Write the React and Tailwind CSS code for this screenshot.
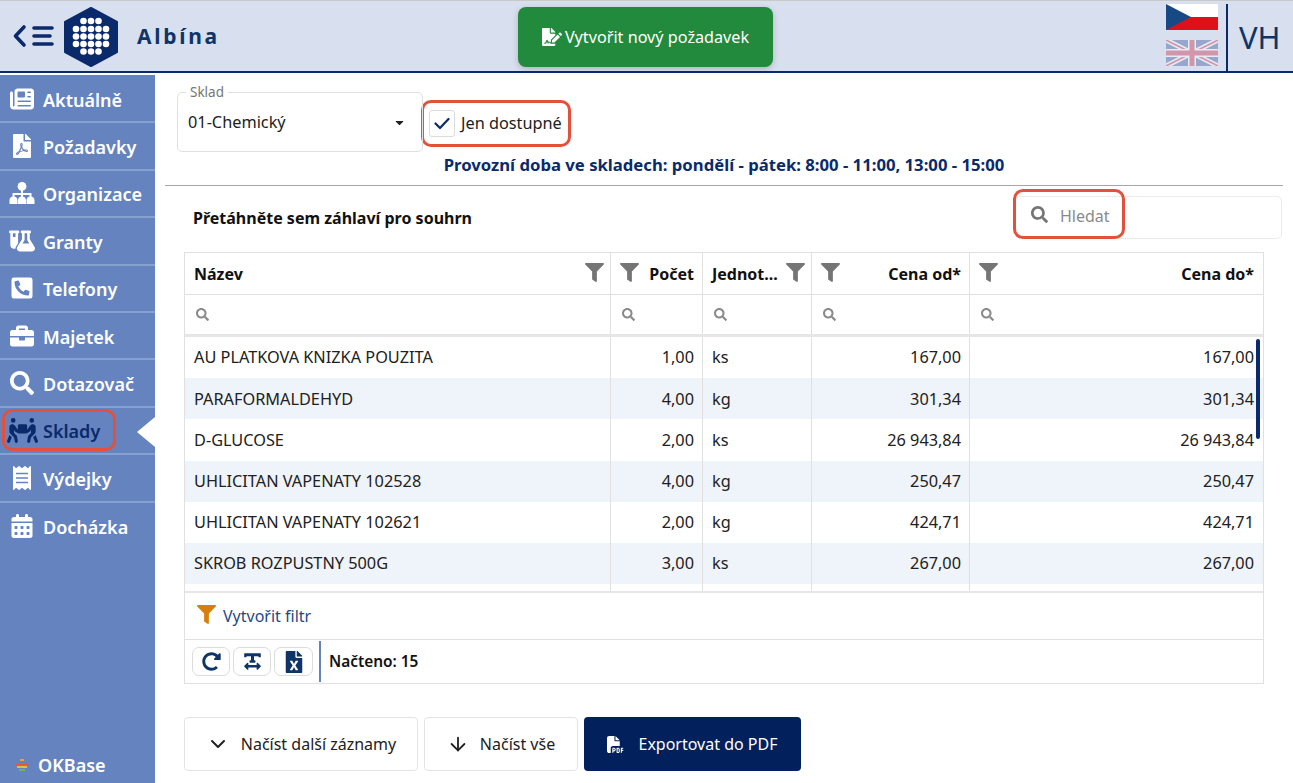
import {
  FaPhoneSquareAlt, FaBriefcase, FaSearch, FaReceipt, FaFilePdf, FaFileSignature, FaFilter,
  FaRedoAlt, FaTextWidth, FaFileExcel, FaCaretDown,
} from "react-icons/fa";
import { FaFlaskVial, FaNewspaper, FaPeopleCarryBox, FaCalendarDays, FaFilePdf as FaFilePdfLabel } from "react-icons/fa6";
import { ChevronDown, ArrowDown } from "lucide-react";

const Organization = ({ className }) => (
  <svg viewBox="0 0 26 22" fill="currentColor" className={className}>
    <circle cx="13" cy="4.4" r="4.4" />
    <path d="M12 8h2v3h8.5v4h-2v-2H14v2h-2v-2H5.500v2h-2v-4H12z" />
    <path d="M4.500 14.500c2.500 0 4 1.500 4 3.700V22H.5v-3.800c0-2.200 1.500-3.700 4-3.700z" />
    <path d="M13 14.500c2.500 0 4 1.500 4 3.700V22H9v-3.800c0-2.200 1.500-3.700 4-3.700z" />
    <path d="M21.500 14.500c2.500 0 4 1.500 4 3.700V22h-8v-3.800c0-2.200 1.500-3.700 4-3.700z" />
  </svg>
);

const menu = [
  { label: "Aktuálně", icon: FaNewspaper },
  { label: "Požadavky", icon: FaFilePdf },
  { label: "Organizace", icon: Organization },
  { label: "Granty", icon: FaFlaskVial },
  { label: "Telefony", icon: FaPhoneSquareAlt },
  { label: "Majetek", icon: FaBriefcase },
  { label: "Dotazovač", icon: FaSearch },
  { label: "Sklady", icon: FaPeopleCarryBox, active: true },
  { label: "Výdejky", icon: FaReceipt },
  { label: "Docházka", icon: FaCalendarDays, last: true },
];

const rows = [
  ["AU PLATKOVA KNIZKA POUZITA", "1,00", "ks", "167,00", "167,00"],
  ["PARAFORMALDEHYD", "4,00", "kg", "301,34", "301,34"],
  ["D-GLUCOSE", "2,00", "ks", "26 943,84", "26 943,84"],
  ["UHLICITAN VAPENATY 102528", "4,00", "kg", "250,47", "250,47"],
  ["UHLICITAN VAPENATY 102621", "2,00", "kg", "424,71", "424,71"],
  ["SKROB ROZPUSTNY 500G", "3,00", "ks", "267,00", "267,00"],
];

const cols = "grid grid-cols-[426px_92px_109px_158px_1fr]";

const logoRows = [
  [19.5, 27, 34.5],
  [12, 19.5, 27, 34.5, 42],
  [12, 19.5, 27, 34.5, 42],
  [12, 19.5, 27, 34.5, 42],
  [19.5, 27, 34.5],
];
const logoY = [14, 22, 29.5, 37, 44.5];

const Logo = () => (
  <svg width="54" height="60" viewBox="0 0 54 60" className="shrink-0 mt-[2px]">
    <path d="M27 1 L53 15 V45 L27 59 L1 45 V15 Z" fill="#0a2a6b" stroke="#0a2a6b" strokeWidth="2" strokeLinejoin="round" />
    {logoRows.map((row, r) =>
      row.map((x) => <circle key={`${r}-${x}`} cx={x} cy={logoY[r]} r="3.3" fill="#fff" />)
    )}
  </svg>
);

const BackMenu = () => (
  <svg width="41" height="24" viewBox="0 0 41 24" fill="none" stroke="#0a2a6b" strokeWidth="3.6" strokeLinecap="round" strokeLinejoin="round" className="shrink-0">
    <path d="M11 3 L2.500 12 L11 21" />
    <path d="M21 4 H39 M21 12 H37 M21 20 H39" />
  </svg>
);

const CzFlag = () => (
  <svg width="52" height="26" viewBox="0 0 52 26" className="block">
    <rect width="52" height="13" fill="#fff" />
    <rect y="13" width="52" height="13" fill="#df1118" />
    <path d="M0 0 L25 13 L0 26 Z" fill="#174a84" />
  </svg>
);

const UkFlag = () => (
  <svg width="52" height="26" viewBox="0 0 52 26" className="block opacity-35">
    <rect width="52" height="26" fill="#1f3f8f" />
    <path d="M0 0 L52 26 M52 0 L0 26" stroke="#fff" strokeWidth="5" />
    <path d="M0 0 L52 26 M52 0 L0 26" stroke="#c8102e" strokeWidth="1.6" />
    <path d="M26 0 V26 M0 13 H52" stroke="#fff" strokeWidth="8" />
    <path d="M26 0 V26 M0 13 H52" stroke="#c8102e" strokeWidth="5" />
  </svg>
);

const HeadFilter = () => <FaFilter className="text-[19px] text-[#757575] shrink-0 -mt-[3px]" />;
const SmallSearch = () => <FaSearch className="text-[13px] text-[#8a8a8a]" />;

export default function App() {
  return (
    <div className="w-[1293px] h-[783px] overflow-hidden bg-white flex flex-col font-['Noto_Sans','Open_Sans',sans-serif] text-[#212121]">
      <header className="h-[73px] shrink-0 flex bg-[#d8dfee] border-t border-t-[#c9c9c9] border-b-2 border-b-[#0a2a6b]">
        <div className="w-[518px] flex items-center pl-[13px] gap-[10px]">
          <BackMenu />
          <Logo />
          <span className="ml-[9px] pt-[1px] text-[21px] font-bold tracking-[2.7px] text-[#0f3566]">Albína</span>
        </div>
        <div className="flex-1 pt-[6px]">
          <button className="w-[255px] h-[60px] rounded-lg bg-[#218a3d] text-white text-[16.2px] flex items-center justify-center gap-[3px] shadow-[0_2px_6px_rgba(0,0,0,0.2)]">
            <FaFileSignature className="text-[20px]" />
            Vytvořit nový požadavek
          </button>
        </div>
        <div className="w-[60px] -ml-[3px] mr-[3px] flex flex-col items-center gap-[10px] pt-[3px]">
          <CzFlag />
          <UkFlag />
        </div>
        <div className="w-[67px] ml-[1px] border-l-2 border-l-[#0a2a6b] mt-[3px] flex items-center pl-[11px] text-[31px] text-[#0f3566]">VH</div>
      </header>

      <div className="flex-1 flex pt-[2px] min-h-0">
        <nav className="w-[155px] shrink-0 bg-[#6483bf] flex flex-col text-white pt-[1px]">
          {menu.map((m) => (
            <div key={m.label} className={`h-[47.4px] shrink-0 flex items-center relative ${m.last ? "" : "border-b-2 border-b-[#86a0d0]"}`}>
              {m.active ? (
                <>
                  <div className="ml-[2px] w-[114px] h-[42px] border-[3px] border-[#e4513b] rounded-[10px] flex items-center gap-[5px] pl-[2px] text-[#0a2a6b]">
                    <m.icon className="text-[25px] w-[31px] h-[25px] shrink-0" />
                    <span className="text-[18px] font-semibold pt-[2px]">{m.label}</span>
                  </div>
                  <div className="absolute right-0 top-[9px] w-0 h-0 border-y-[15px] border-y-transparent border-r-[18px] border-r-white" />
                </>
              ) : (
                <>
                  <span className="w-[43px] flex justify-center shrink-0">
                    <m.icon className="text-[24px] w-[26px] h-[24px]" />
                  </span>
                  <span className="text-[18px] font-semibold pt-[3px]">{m.label}</span>
                </>
              )}
            </div>
          ))}
          <div className="mt-auto h-[36px] flex items-center pl-[15px] gap-[9px] text-[18px] font-semibold">
            <svg width="14" height="14" viewBox="0 0 14 14">
              <rect x="5" y="1" width="4" height="2" fill="#e8a33d" />
              <rect x="1" y="5" width="12" height="2" fill="#e4583b" />
              <rect x="2" y="8" width="10" height="2" fill="#d9c23d" />
              <rect x="4" y="11" width="6" height="2" fill="#74b35a" />
            </svg>
            OKBase
          </div>
        </nav>

        <main className="flex-1 min-w-0 flex flex-col">
          <div className="flex pl-[22px] pt-[17px] h-[77px]">
            <div className="relative w-[246px] h-[60px] border border-[#e0e0e0] rounded-[5px] flex items-center justify-between pl-[10px] pr-[16px] text-[16.3px]">
              <span className="absolute -top-[9px] left-[8px] bg-white px-[4px] text-[13.500px] leading-[16px] text-[#757575]">Sklad</span>
              <span>01-Chemický</span>
              <FaCaretDown className="text-[13px] text-[#212121]" />
            </div>
            <div className="ml-[-2px] mt-[8px] w-[150px] h-[47px] border-[3px] border-[#e4513b] rounded-[10px] flex items-center pl-[5px] gap-[6px] text-[16.3px] bg-white">
              <span className="w-[26px] h-[27px] border border-[#dcdcdc] rounded-[3px] flex items-center justify-center">
                <svg width="16" height="13" viewBox="0 0 16 13" fill="none" stroke="#0a2a6b" strokeWidth="2.2" strokeLinecap="round" strokeLinejoin="round">
                  <path d="M1.500 6.500 L6 11 L14.500 2" />
                </svg>
              </span>
              Jen dostupné
            </div>
          </div>
          <div className="ml-[10px] w-[1118px] h-[34px] border-b border-b-[#a6a6a6] text-center text-[#0a2a6b] text-[16.7px] font-bold leading-[26px]">
            Provozní doba ve skladech: pondělí - pátek: 8:00 - 11:00, 13:00 - 15:00
          </div>

          <div className="h-[66px] shrink-0 flex items-start">
            <span className="ml-[38px] mt-[22px] text-[16px] leading-[20px] font-bold text-[#111]">Přetáhněte sem záhlaví pro souhrn</span>
            <div className="relative ml-auto mr-[11px] mt-[10px] w-[267px] h-[43px] border border-[#ececec] rounded-[5px]">
              <div className="absolute -left-[3px] -top-[8px] w-[112px] h-[50px] border-[3px] border-[#e4513b] rounded-[10px] flex items-center pl-[15px] gap-[12px] text-[16px] text-[#8a8a8a]">
                <FaSearch className="text-[17px] text-[#757575] mt-[1px]" />
                <span className="pt-[4px]">Hledat</span>
              </div>
            </div>
          </div>

          <section className="ml-[29px] w-[1080px] border border-[#e0e0e0] text-[16.3px]">
            <div className={`${cols} h-[42px] border-b border-b-[#e0e0e0] font-bold text-[#111] text-[16px]`}>
              <div className="flex items-center justify-between px-[9px] pr-[6px] border-r border-r-[#e0e0e0]">Název<HeadFilter /></div>
              <div className="flex items-center justify-between pl-[9px] pr-[8px] border-r border-r-[#e0e0e0]"><HeadFilter />Počet</div>
              <div className="flex items-center justify-between pl-[9px] pr-[6px] border-r border-r-[#e0e0e0] whitespace-nowrap overflow-hidden">Jednot...<HeadFilter /></div>
              <div className="flex items-center justify-between pl-[9px] pr-[8px] border-r border-r-[#e0e0e0]"><HeadFilter />Cena od*</div>
              <div className="flex items-center justify-between pl-[9px] pr-[9px]"><HeadFilter />Cena do*</div>
            </div>
            <div className={`${cols} h-[42px] border-b-[3px] border-b-[#e6e6e6]`}>
              {[0, 1, 2, 3, 4].map((i) => (
                <div key={i} className="flex items-center pl-[11px] border-r border-r-[#e0e0e0] last:border-r-0"><SmallSearch /></div>
              ))}
            </div>
            <div className="relative h-[256px] overflow-hidden border-b-2 border-b-[#e6e6e6]">
              {rows.map((r, i) => (
                <div key={r[0]} className={`${cols} h-[41.2px] ${i % 2 ? "bg-[#eff3fa]" : "bg-white"}`}>
                  <div className="flex items-center pl-[9px] border-r border-r-[#e0e0e0]">{r[0]}</div>
                  <div className="flex items-center justify-end pr-[8px] border-r border-r-[#e0e0e0]">{r[1]}</div>
                  <div className="flex items-center pl-[9px] border-r border-r-[#e0e0e0]">{r[2]}</div>
                  <div className="flex items-center justify-end pr-[8px] border-r border-r-[#e0e0e0]">{r[3]}</div>
                  <div className="flex items-center justify-end pr-[9px]">{r[4]}</div>
                </div>
              ))}
              <div className={`${cols} h-[9px]`}>
                <div className="border-r border-r-[#e0e0e0]" />
                <div className="border-r border-r-[#e0e0e0]" />
                <div className="border-r border-r-[#e0e0e0]" />
                <div className="border-r border-r-[#e0e0e0]" />
              </div>
              <div className="absolute right-[3px] top-[2px] w-[4px] h-[100px] rounded-full bg-[#0a2a6b]" />
            </div>
            <div className="h-[47px] border-b border-b-[#e0e0e0] flex items-center pl-[12px] gap-[7px] text-[#1f4a8a] text-[16px]">
              <FaFilter className="text-[19px] text-[#d77f0a] -mt-[4px]" />
              Vytvořit filtr
            </div>
            <div className="h-[43px] flex items-center pl-[7px] gap-[3px]">
              <button className="w-[38px] h-[29px] border border-[#dcdcdc] rounded-[7px] flex items-center justify-center text-[#0f3566]"><FaRedoAlt className="text-[19px]" /></button>
              <button className="w-[38px] h-[29px] border border-[#dcdcdc] rounded-[7px] flex items-center justify-center text-[#0f3566]"><FaTextWidth className="text-[19px]" /></button>
              <button className="w-[39px] h-[29px] border border-[#dcdcdc] rounded-[7px] flex items-center justify-center text-[#0f3566]"><FaFileExcel className="text-[22px]" /></button>
              <div className="ml-[3px] h-[41px] border-l-2 border-l-[#6483bf] flex items-center pl-[8px] text-[15.400px] font-semibold text-[#111]">Načteno: 15</div>
            </div>
          </section>

          <div className="ml-[29px] mt-[33px] flex gap-[6px] text-[16px]">
            <button className="w-[234px] h-[54px] border border-[#e3e3e3] rounded-[4px] flex items-center justify-center gap-[11px]"><ChevronDown size={24} strokeWidth={2} />Načíst další záznamy</button>
            <button className="w-[154px] h-[54px] border border-[#e3e3e3] rounded-[4px] flex items-center justify-center gap-[11px]"><ArrowDown size={22} strokeWidth={2} />Načíst vše</button>
            <button className="w-[217px] h-[54px] rounded-[4px] bg-[#02205c] text-white flex items-center justify-center gap-[14px]"><FaFilePdfLabel className="text-[17px]" />Exportovat do PDF</button>
          </div>
        </main>
      </div>
    </div>
  );
}
